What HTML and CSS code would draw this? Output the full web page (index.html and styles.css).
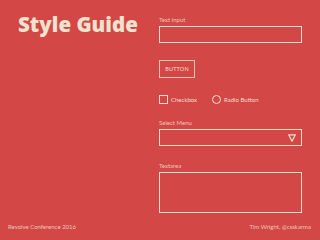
FILE: index.html
```html
<!DOCTYPE html>
<html lang="en">
<head>
    <meta charset="UTF-8">
    <meta name="viewport" content="width=device-width, initial-scale=1.0">
    <title>Style Guide</title>
    <link rel="stylesheet" href="styles.css">
</head>
<body>
    <div class="slide">
        <div class="main">
            <div class="intro">
                <h1>Style Guide</h1>
            </div>
            <div class="form">
                <label class="label">Text Input</label>
                <div class="field"></div>

                <div class="button">BUTTON</div>

                <div class="choices">
                    <span class="choice"><span class="box"></span>Checkbox</span>
                    <span class="choice"><span class="radio"></span>Radio Button</span>
                </div>

                <label class="label label-select">Select Menu</label>
                <div class="field select">
                    <svg width="8" height="8" viewBox="0 0 8 8">
                        <path d="M0.7 0.8 H7.3 L4 7.2 Z" fill="none" stroke="#f2dfcb" stroke-width="1.2"/>
                    </svg>
                </div>

                <label class="label label-area">Textarea</label>
                <div class="field textarea"></div>
            </div>
        </div>
        <div class="footer">
            <span>Revolve Conference 2016</span>
            <span>Tim Wright, @csskarma</span>
        </div>
    </div>
</body>
</html>
```

FILE: styles.css
```css
body {
    margin: 0;
    background-color: #d34846;
    font-family: Lato, "Open Sans", sans-serif;
    color: #f2dfcb;
}
.slide {
    width: 320px;
    height: 240px;
    display: flex;
    flex-direction: column;
}
.main {
    display: flex;
    flex: 1;
}
.intro {
    width: 159px;
    padding: 10px 0 0 18px;
    box-sizing: border-box;
}
h1 {
    margin: 0;
    font-family: "Open Sans", Lato, sans-serif;
    font-size: 20.5px;
    font-weight: 800;
    line-height: 28px;
    letter-spacing: 0;
    color: #efe2cf;
}
.form {
    width: 143px;
    display: flex;
    flex-direction: column;
    padding-top: 16px;
}
.label {
    display: block;
    font-size: 6px;
    line-height: 8px;
    height: 8px;
    margin-bottom: 2px;
    opacity: 0.85;
}
.field {
    height: 17px;
    border: 1.5px solid #f2dfcb;
    box-sizing: border-box;
}
.button {
    align-self: flex-start;
    width: 36px;
    height: 18px;
    margin-top: 17px;
    border: 1.3px solid #eec3b2;
    box-sizing: border-box;
    font-size: 5.5px;
    line-height: 16px;
    text-align: center;
    letter-spacing: 0.2px;
}
.choices {
    display: flex;
    gap: 15px;
    margin-top: 17px;
    font-size: 6px;
    line-height: 9px;
}
.choice {
    display: flex;
    align-items: center;
    gap: 3px;
}
.box {
    width: 9px;
    height: 9px;
    border: 1.2px solid #f2dfcb;
    box-sizing: border-box;
}
.radio {
    width: 9px;
    height: 9px;
    border: 1.2px solid #f2dfcb;
    border-radius: 50%;
    box-sizing: border-box;
}
.label-select {
    margin-top: 15px;
}
.select {
    display: flex;
    justify-content: flex-end;
    align-items: center;
    padding-right: 5px;
}
.label-area {
    margin-top: 16px;
}
.textarea {
    height: 41px;
}
.footer {
    display: flex;
    justify-content: space-between;
    padding: 0 9px 9px 8px;
    font-size: 6px;
    line-height: 8px;
    opacity: 0.85;
}
```
